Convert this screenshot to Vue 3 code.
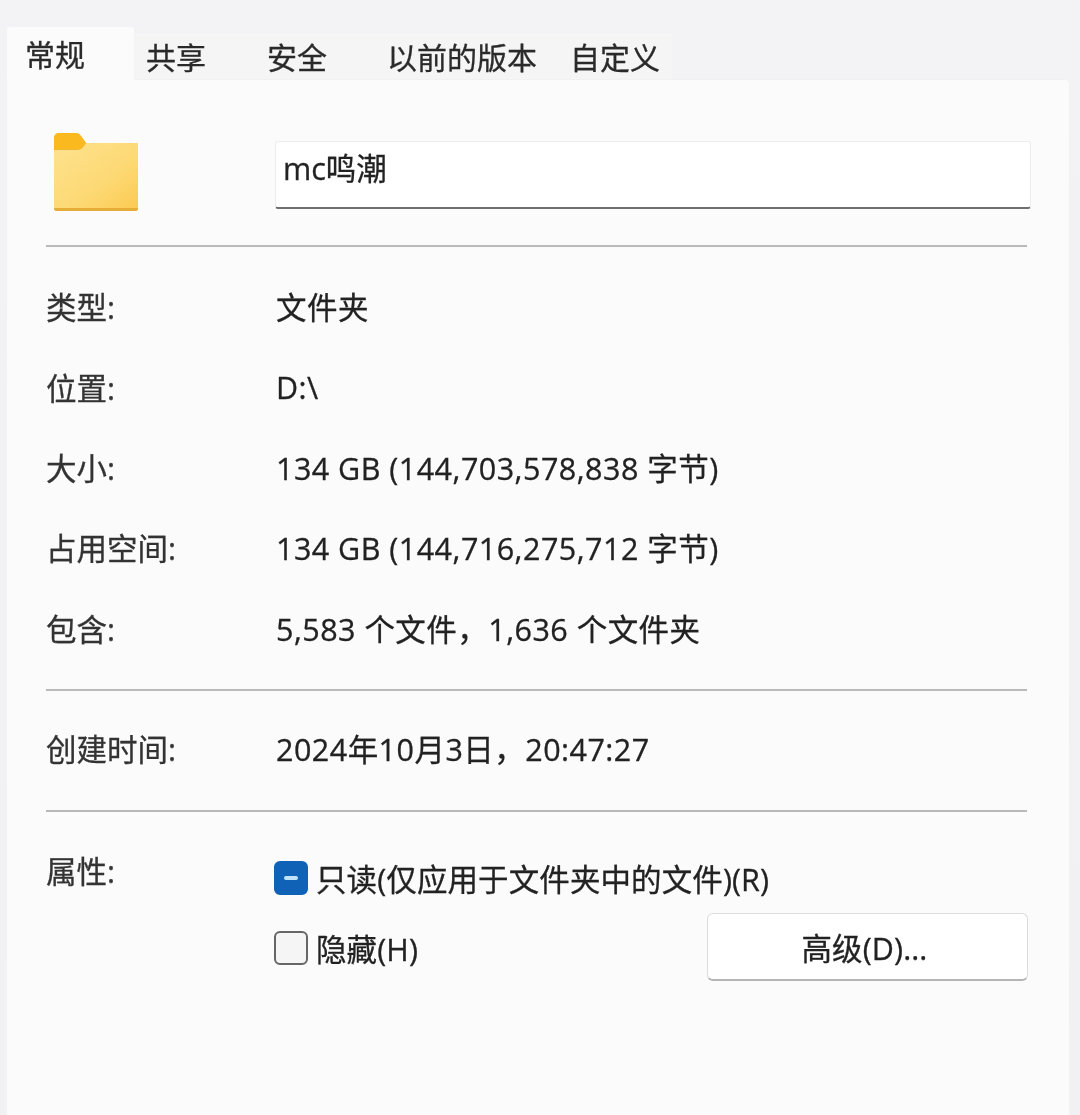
<script setup>
const tabs = ['常规', '共享', '安全', '以前的版本', '自定义']
const groupA = [
  { label: '类型:', value: '文件夹' },
  { label: '位置:', value: 'D:\\' },
  { label: '大小:', value: '134 GB (144,703,578,838 字节)' },
  { label: '占用空间:', value: '134 GB (144,716,275,712 字节)' },
  { label: '包含:', value: '5,583 个文件，1,636 个文件夹' }
]
</script>

<template>
  <div class="window">
    <div class="tabs">
      <div
        v-for="(tab, i) in tabs"
        :key="tab"
        class="tab"
        :class="['tab-' + i, { active: i === 0 }]"
      ><span class="txt">{{ tab }}</span></div>
    </div>
    <div class="panel">
      <div class="head">
        <svg class="folder" viewBox="0 0 84 80" width="84" height="80">
          <defs>
            <linearGradient id="body" x1="0" y1="0" x2="1" y2="1">
              <stop offset="0" stop-color="#fde28e" />
              <stop offset="0.6" stop-color="#fdd974" />
              <stop offset="1" stop-color="#fbca52" />
            </linearGradient>
          </defs>
          <path d="M0 6a5 5 0 0 1 5-5h17a6 6 0 0 1 5 3l5 7h50a2 2 0 0 1 2 2v63a3 3 0 0 1-3 3H3a3 3 0 0 1-3-3z" fill="#f3b630" />
          <path d="M0 18h24a6 6 0 0 0 5-3l2-4h51a2 2 0 0 1 2 2v62a2 2 0 0 1-2 2H2a2 2 0 0 1-2-2z" fill="url(#body)" />
          <path d="M0 6a5 5 0 0 1 5-5h17a6 6 0 0 1 5 3l5 7-2 3a6 6 0 0 1-5 3H0z" fill="#fbb920" />
          <path d="M0 76h84a3 3 0 0 1-3 3H3a3 3 0 0 1-3-3z" fill="#e6ad38" />
        </svg>
        <div class="name"><span class="txt">mc鸣潮</span></div>
      </div>
      <div class="rule"></div>
      <div class="rows">
        <div v-for="row in groupA" :key="row.label" class="row">
          <div class="label"><span class="txt">{{ row.label }}</span></div>
          <div class="value txt">{{ row.value }}</div>
        </div>
      </div>
      <div class="rule"></div>
      <div class="row created">
        <div class="label"><span class="txt">创建时间:</span></div>
        <div class="value txt">2024年10月3日，20:47:27</div>
      </div>
      <div class="rule"></div>
      <div class="attrs">
        <div class="label attr-label"><span class="txt">属性:</span></div>
        <div class="attr-body">
          <div class="check-line">
            <span class="box on"><span class="dash"></span></span>
            <span class="check-text txt">只读(仅应用于文件夹中的文件)(R)</span>
          </div>
          <div class="check-line second">
            <span class="box"></span>
            <span class="check-text txt">隐藏(H)</span>
            <div class="btn"><span class="txt">高级(D)...</span></div>
          </div>
        </div>
      </div>
    </div>
  </div>
</template>

<style scoped>
.window {
  width: 1080px;
  height: 1115px;
  box-sizing: border-box;
  padding: 27px 11px 0 7px;
  background: linear-gradient(#f3f3f5, #f1f1f3);
  font-family: "Open Sans", "Noto Sans CJK SC", sans-serif;
  font-size: 30.5px;
  letter-spacing: 0.47px;
  color: #222;
  overflow: hidden;
  display: flex;
  flex-direction: column;
}
.txt {
  display: inline-block;
  filter: blur(0.5px);
  -webkit-text-stroke: 0.3px currentColor;
}
.tabs {
  display: flex;
  align-items: flex-end;
  height: 53px;
  font-size: 30px;
  letter-spacing: 0;
  flex: none;
}
.tab {
  height: 46px;
  box-sizing: border-box;
  background: #f5f5f6;
  display: flex;
  align-items: center;
  line-height: 46px;
  padding-top: 2px;
  color: #2a2a2a;
}
.tab.active {
  height: 62px;
  margin-bottom: -9px;
  align-self: flex-start;
  background: #fbfbfb;
  position: relative;
  z-index: 1;
  padding: 0 0 6px 18px;
  border-radius: 3px 3px 0 0;
}
.tab-0 { width: 127px; }
.tab-1 { width: 116px; padding-left: 12px; }
.tab-2 { width: 120px; padding-left: 17px; }
.tab-3 { width: 185px; padding-left: 17px; }
.tab-4 { width: 117px; padding-left: 15px; }
.panel {
  flex: 1;
  background: #fbfbfb;
  border-radius: 0 4px 0 0;
  padding: 0 37px 0 39px;
  box-shadow: 0 0 0 1px #f1f1f2;
}
.head {
  display: flex;
  align-items: flex-start;
  height: 165px;
  padding-top: 52px;
  box-sizing: border-box;
}
.folder {
  flex: none;
  margin-left: 8px;
}
.name {
  flex: none;
  margin: 9px 0 0 137px;
  width: 756px;
  height: 68px;
  box-sizing: border-box;
  background: #fff;
  border: 1px solid #ececec;
  border-bottom: 2px solid #6f6f6f;
  border-radius: 3px;
  padding-left: 7px;
  line-height: 52px;
  letter-spacing: 0;
  color: #222;
}
.rule {
  height: 2px;
  background: #b9b9b9;
  width: 981px;
}
.rows {
  padding-top: 19px;
  height: 442px;
  box-sizing: border-box;
}
.row {
  display: flex;
  align-items: center;
  height: 80.4px;
}
.label {
  width: 230px;
  flex: none;
  color: #333;
  letter-spacing: 0;
}
.value {
  white-space: nowrap;
  color: #222;
}
.created {
  height: 119px;
  padding-bottom: 6px;
  box-sizing: border-box;
}
.attrs {
  display: flex;
  padding-top: 38px;
}
.attr-label {
  line-height: 42px;
}
.attr-body {
  flex: 1;
  padding-top: 5px;
  margin: 0 4px 0 -2px;
  letter-spacing: 0.1px;
}
.check-line {
  display: flex;
  align-items: center;
  height: 46px;
}
.check-line.second {
  margin-top: 24px;
}
.box {
  width: 34px;
  height: 34px;
  box-sizing: border-box;
  border: 2px solid #666;
  border-radius: 6px;
  background: #f5f5f5;
  margin-right: 8px;
  flex: none;
  display: flex;
  align-items: center;
  justify-content: center;
}
.box.on {
  background: #0f62b5;
  border-color: #0f62b5;
}
.dash {
  width: 14px;
  height: 4px;
  border-radius: 2px;
  background: #bfe3fb;
}
.check-text {
  white-space: nowrap;
  color: #222;
}
.btn {
  width: 321px;
  height: 68px;
  box-sizing: border-box;
  margin: -2px 0 0 auto;
  background: #fff;
  border: 1px solid #dcdcdc;
  border-bottom: 2px solid #b5b5b5;
  border-radius: 6px;
  display: flex;
  align-items: center;
  justify-content: center;
  padding-right: 6px;
  color: #222;
}
</style>
